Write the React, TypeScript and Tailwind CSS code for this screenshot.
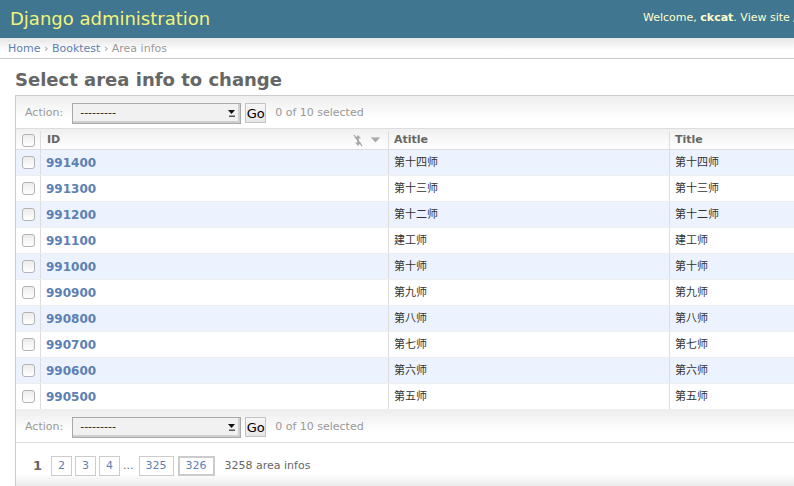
import React from 'react';

const rows = [
    { id: '991400', title: '第十四师' },
    { id: '991300', title: '第十三师' },
    { id: '991200', title: '第十二师' },
    { id: '991100', title: '建工师' },
    { id: '991000', title: '第十师' },
    { id: '990900', title: '第九师' },
    { id: '990800', title: '第八师' },
    { id: '990700', title: '第七师' },
    { id: '990600', title: '第六师' },
    { id: '990500', title: '第五师' },
];

function Checkbox() {
    return <span className="block h-[13px] w-[13px] rounded-[3px] border border-[#b3b3b3] bg-gradient-to-b from-[#ececec] to-white" />;
}

function ActionBar() {
    return (
        <div className="flex h-[33px] items-center border-b border-[#ddd] bg-gradient-to-b from-[#eeeeee] to-white to-70% pl-[9px] pt-[2px] text-[11px] text-[#999]">
            <span>Action:</span>
            <div className="ml-[9px] flex h-[21px] w-[169px] items-center justify-between border border-[#a9a9a9] bg-[#f1f1f1] pl-[7px] pr-[5px] text-[#222] shadow-[inset_-2px_-2px_0_#cfcfcf]">
                <span>---------</span>
                <svg width="7" height="8" viewBox="0 0 7 8">
                    <polygon points="0,1 7,1 3.5,5" fill="#111" />
                    <rect x="1" y="6.5" width="6" height="1.5" fill="#555" />
                </svg>
            </div>
            <button className="ml-[4px] h-[20px] w-[21px] border border-[#c4c4c4] bg-gradient-to-b from-[#f6f6f6] to-[#e6e6e6] text-[13px] leading-none text-black">Go</button>
            <span className="ml-[9px]">0 of 10 selected</span>
        </div>
    );
}

function SortIcons() {
    return (
        <div className="mr-[8px] flex items-center gap-[8px]">
            <svg width="10" height="13" viewBox="0 0 10 13">
                <polygon points="2,4.5 5,1 8,4.5" fill="#aaa" />
                <polygon points="2,8.5 5,12 8,8.5" fill="#aaa" />
                <line x1="5" y1="4" x2="5" y2="9" stroke="#aaa" strokeWidth="1.5" />
                <line x1="1" y1="1" x2="9" y2="12" stroke="#999" strokeWidth="1.2" />
            </svg>
            <svg width="9" height="6" viewBox="0 0 9 6">
                <polygon points="0,0.5 9,0.5 4.5,5.5" fill="#aaa" />
                <line x1="0" y1="0.5" x2="9" y2="0.5" stroke="#c8c8c8" strokeWidth="1" />
            </svg>
        </div>
    );
}

export default function App() {
    return (
        <div className="h-[486px] w-[794px] overflow-hidden bg-white font-['DejaVu_Sans','Noto_Sans_CJK_SC',sans-serif] text-[12px] text-[#333]">
            <header className="flex h-[38px] items-center bg-[#417690] pb-[1px]">
                <h1 className="px-[10px] text-[18px] font-normal leading-none text-[#f4f379]">Django administration</h1>
                <div className="ml-auto w-[151px] shrink-0 whitespace-nowrap text-[11px] text-[#ffc]">
                    Welcome, <strong>ckcat</strong>. View site / Change password / Log out
                </div>
            </header>

            <div className="h-[21px] border-b border-[#ccc] bg-gradient-to-b from-[#e6e6e6] to-white to-60% px-[8px] pt-[1px] text-[11px] leading-[20px] text-[#999]">
                <a className="text-[#5b80b2]">Home</a> › <a className="text-[#5b80b2]">Booktest</a> › Area infos
            </div>

            <div className="px-[15px] pt-[10px]">
                <h1 className="mb-[5px] text-[18px] font-bold leading-[21px] text-[#666]">Select area info to change</h1>

                <div className="w-[960px] border-l border-t border-[#ccc]">
                    <ActionBar />

                    <div className="grid h-[21px] grid-cols-[24px_348px_281px_307px] border-b border-[#ddd] bg-gradient-to-b from-[#f0f0f0] to-white pt-[2px] text-[11px] font-bold text-[#666]">
                        <div className="flex items-center pl-[6px]"><Checkbox /></div>
                        <div className="flex items-center justify-between border-l border-[#ddd] pl-[6px]">
                            <span>ID</span>
                            <SortIcons />
                        </div>
                        <div className="flex items-center border-l border-[#ddd] pl-[5px]">Atitle</div>
                        <div className="flex items-center border-l border-[#ddd] pl-[5px]">Title</div>
                    </div>

                    {rows.map((row, i) => (
                        <div
                            key={row.id}
                            className={`grid h-[26px] grid-cols-[24px_348px_281px_307px] border-b border-[#eee] ${i % 2 === 0 ? 'bg-[#edf3fe]' : 'bg-white'}`}
                        >
                            <div className="flex items-center pl-[6px]"><Checkbox /></div>
                            <div className="flex items-center border-l border-[#ddd] pl-[5px] text-[12px] font-bold text-[#5b80b2]">{row.id}</div>
                            <div className="flex items-center border-l border-[#ddd] pl-[5px] pt-[2px] text-[11px] text-[#333]">{row.title}</div>
                            <div className="flex items-center border-l border-[#ddd] pl-[5px] pt-[2px] text-[11px] text-[#333]">{row.title}</div>
                        </div>
                    ))}

                    <ActionBar />

                    <div className="flex h-[44px] items-center bg-gradient-to-b from-white from-70% to-[#e9e9e9] pl-[11px] pt-[2px] text-[11px] text-[#666]">
                        <span className="px-[6px] text-[13px] font-bold text-[#666]">1</span>
                        <div className="ml-[3px] flex items-center gap-[3px] text-[#5b80b2]">
                            <a className="border border-[#ccc] bg-white px-[6px] py-[2px] leading-[14px]">2</a>
                            <a className="border border-[#ccc] bg-white px-[6px] py-[2px] leading-[14px]">3</a>
                            <a className="border border-[#ccc] bg-white px-[6px] py-[2px] leading-[14px]">4</a>
                            <span className="text-[#666]">...</span>
                            <a className="ml-[2px] border border-[#ccc] bg-white px-[6px] py-[2px] leading-[14px]">325</a>
                            <a className="ml-[1px] border-2 border-[#ccc] bg-white px-[6px] py-[1px] leading-[14px]">326</a>
                        </div>
                        <span className="ml-[10px]">3258 area infos</span>
                    </div>
                </div>
            </div>
        </div>
    );
}
